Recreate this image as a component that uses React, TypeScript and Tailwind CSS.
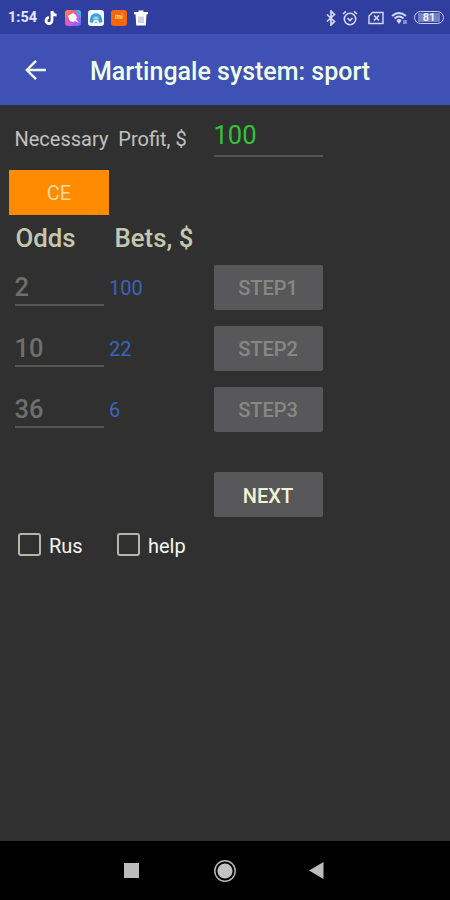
import React, { useState } from "react";

interface OddsRow {
  odds: string;
  bet: string;
  step: string;
}

const rows: OddsRow[] = [
  { odds: "2", bet: "100", step: "STEP1" },
  { odds: "10", bet: "22", step: "STEP2" },
  { odds: "36", bet: "6", step: "STEP3" },
];

const StatusBar: React.FC = () => {
  return (
    <div className="flex h-[34px] items-center bg-[#303f9f] pl-[8px] pr-[6px] pt-px">
      <span className="w-[36px] pt-[2px] text-[14.5px] font-bold leading-none text-[#e3e6fa]">
        1:54
      </span>
      <svg className="h-4 w-[14px]" viewBox="0 0 14 16">
        <path
          d="M8 1v9.600a3 3 0 1 1-3-3M8 1c.3 2.600 2 4 4.600 4.200"
          fill="none"
          stroke="#fff"
          strokeWidth="2.800"
        />
      </svg>
      <svg className="ml-[7px] h-4 w-4" viewBox="0 0 16 16">
        <defs>
          <linearGradient id="app" x1="0" y1="0" x2="1" y2="1">
            <stop offset="0" stopColor="#ff9a3c" />
            <stop offset="0.35" stopColor="#f4588c" />
            <stop offset="0.6" stopColor="#c85ce8" />
            <stop offset="1" stopColor="#5c6cff" />
          </linearGradient>
        </defs>
        <rect width="16" height="16" rx="3" fill="url(#app)" />
        <path d="M10 0h3a3 3 0 0 1 3 3v5z" fill="#35b6ea" />
        <path d="M3 6l3-2 2-1 3 2 1 3-1 1 3 4-4-2-2 1-3-1-1-2z" fill="#fff" />
      </svg>
      <svg className="ml-[7px] h-4 w-4" viewBox="0 0 16 16">
        <rect width="16" height="16" rx="3" fill="#f4f9ff" />
        <path d="M1.500 12L3 5.500q5-4.500 10 0l1.500 6.500-3 1-1.500-3H6l-1.500 3z" fill="#3b9fe6" />
        <path d="M5 8q3-3.500 6 0l-1 1.500H6z" fill="#9ad8f7" />
        <path d="M6 13.200l2-2 2 2z" fill="#7cc4f0" />
      </svg>
      <div className="ml-[7px] flex h-4 w-4 items-center justify-center rounded-[3px] bg-[#f9660c] text-[7px] font-bold leading-none text-[#ffd9b8]">
        mi
      </div>
      <svg className="ml-[7px] h-4 w-[14px]" viewBox="0 0 14 16">
        <path d="M0 2h4.500V.500h5V2H14v2.200H0z" fill="#fff" />
        <path d="M1.500 4h11l-.7 11.500H2.200z" fill="#fff" />
        <path d="M5 6.500v6.500M7 6.500v6.500M9 6.500v6.500" stroke="#8f98cf" strokeWidth="0.9" />
      </svg>
      <div className="ml-auto flex items-center">
        <svg className="h-4 w-[10px]" viewBox="0 0 10 16">
          <path
            d="M1 4.500l7.500 7L5 15V1l3.500 3.500L1 11.500"
            fill="none"
            stroke="#d5daf5"
            strokeWidth="1.700"
          />
        </svg>
        <svg className="ml-[6px] h-4 w-4" viewBox="0 0 16 16" fill="none" stroke="#d5daf5">
          <circle cx="8" cy="9" r="5.700" strokeWidth="1.600" />
          <path d="M1 4l3-2.700M15 4l-3-2.700M5.500 8L8 10.500 10.500 8" strokeWidth="1.600" />
        </svg>
        <svg className="ml-[10px] h-4 w-4" viewBox="0 0 16 16" fill="none" stroke="#d5daf5">
          <path d="M4.500 2.500H15v11H1V6z" strokeWidth="1.400" />
          <path d="M6 5.500l5 5M11 5.500l-5 5" strokeWidth="1.600" />
        </svg>
        <svg className="ml-[7px] h-4 w-[17px]" viewBox="0 0 17 16" fill="none" stroke="#d5daf5">
          <path d="M1 6q7-6 14 0M3.500 8.500q4.500-4 9 0M6 11q2-2 4 0" strokeWidth="1.700" />
          <path d="M8 14l-2.200-3h4.400z" fill="#d5daf5" stroke="none" />
          <path d="M13 10v4M15 10v4" strokeWidth="1" />
        </svg>
        <div className="ml-[6px] flex h-[13px] w-[30px] items-center justify-center rounded-full border-[1.500px] border-[#c9cff0]">
          <div className="flex h-[9px] w-[22px] items-center justify-center bg-[#7380c4] text-[11px] font-bold leading-none text-[#f0f2ff]">
            81
          </div>
        </div>
      </div>
    </div>
  );
};

const AppBar: React.FC = () => {
  return (
    <div className="flex h-[70.5px] items-center bg-[#3f51b5] text-[#f0ffe9]">
      <svg className="ml-[25px] mt-[2px] h-[22px] w-[22px]" viewBox="0 0 22 22">
        <path
          d="M21 11H2.500M11 1.800L1.800 11 11 20.200"
          fill="none"
          stroke="currentColor"
          strokeWidth="2.400"
        />
      </svg>
      <h1 className="ml-[43px] mt-[4px] whitespace-nowrap text-[25px] font-medium leading-none">
        Martingale system: sport
      </h1>
    </div>
  );
};

const CheckBox: React.FC<{ label: string }> = ({ label }) => {
  const [checked, setChecked] = useState(false);

  return (
    <label className="flex items-center gap-[8px] text-[20px] leading-none text-[#f5f5f5]">
      <input
        type="checkbox"
        checked={checked}
        onChange={() => setChecked(!checked)}
        className="h-[23px] w-[23px] appearance-none rounded-[3px] border-2 border-[#b4b8a3] checked:bg-[#ff8c00]"
      />
      <span className="pt-[2px]">{label}</span>
    </label>
  );
};

const App: React.FC = () => {
  const [profit, setProfit] = useState("100");

  return (
    <div className="flex h-[900px] w-[450px] flex-col overflow-hidden bg-[#303030] font-['Roboto',sans-serif]">
      <StatusBar />
      <AppBar />
      <main className="flex flex-1 flex-col">
        <div className="flex h-[65.5px] pl-[14.5px]">
          <span className="w-[199px] whitespace-pre pt-[24px] text-[20px] leading-none text-[#c1c1c1]">
            Necessary  Profit, $
          </span>
          <input
            value={profit}
            onChange={(e) => setProfit(e.target.value)}
            className="h-[52px] w-[109px] border-b-2 border-[#54544e] pt-[11px] text-[25.5px] leading-none text-[#33c23a] outline-none"
          />
        </div>
        <button className="ml-[9px] h-[44.5px] w-[100px] bg-[#ff8c00] pt-[2px] text-[20px] leading-none text-[#ffd7a0]">
          CE
        </button>
        <div className="flex h-[50px] pl-[15.5px] pt-[11px] text-[25.800px] font-medium leading-none text-[#c5c8ae]">
          <span className="w-[99px]">Odds</span>
          <span>Bets, $</span>
        </div>
        <div className="flex flex-col gap-[16px]">
          {rows.map((row) => (
            <div key={row.step} className="flex h-[45px] pl-[14.5px]">
              <div className="h-[41px] w-[89px] border-b-2 border-[#555551] pt-[10px] text-[25.5px] font-medium leading-none text-[#6f6f6b]">
                {row.odds}
              </div>
              <span className="w-[110px] pl-[5.5px] pt-[13px] text-[20px] leading-none text-[#3a66bd]">
                {row.bet}
              </span>
              <button
                disabled
                className="w-[109px] rounded-[2px] bg-[#58585a] pt-[2px] text-[20px] font-medium leading-none text-[#888883]"
              >
                {row.step}
              </button>
            </div>
          ))}
        </div>
        <button className="ml-[213.5px] mt-[40.5px] h-[45px] w-[109px] rounded-[2px] bg-[#58585a] pt-[2px] text-[20px] font-medium leading-none text-[#f0f5d0]">
          NEXT
        </button>
        <div className="mt-[16px] flex pl-[18px]">
          <div className="w-[99px]">
            <CheckBox label="Rus" />
          </div>
          <CheckBox label="help" />
        </div>
      </main>
      <nav className="flex h-[59.5px] items-center bg-black pl-[124px] pt-px">
        <div className="h-[15px] w-[15px] bg-[#bcbcbc]" />
        <svg className="ml-[75px] h-[22px] w-[22px]" viewBox="0 0 22 22">
          <circle cx="11" cy="11" r="10.200" fill="none" stroke="#b5b5b5" strokeWidth="1.500" />
          <circle cx="11" cy="11" r="7.600" fill="#c2c2c2" />
        </svg>
        <svg className="ml-[73px] h-[17px] w-[15px]" viewBox="0 0 15 17">
          <path d="M0 8.500L14.500 0v17z" fill="#bcbcbc" />
        </svg>
      </nav>
    </div>
  );
};

export default App;
